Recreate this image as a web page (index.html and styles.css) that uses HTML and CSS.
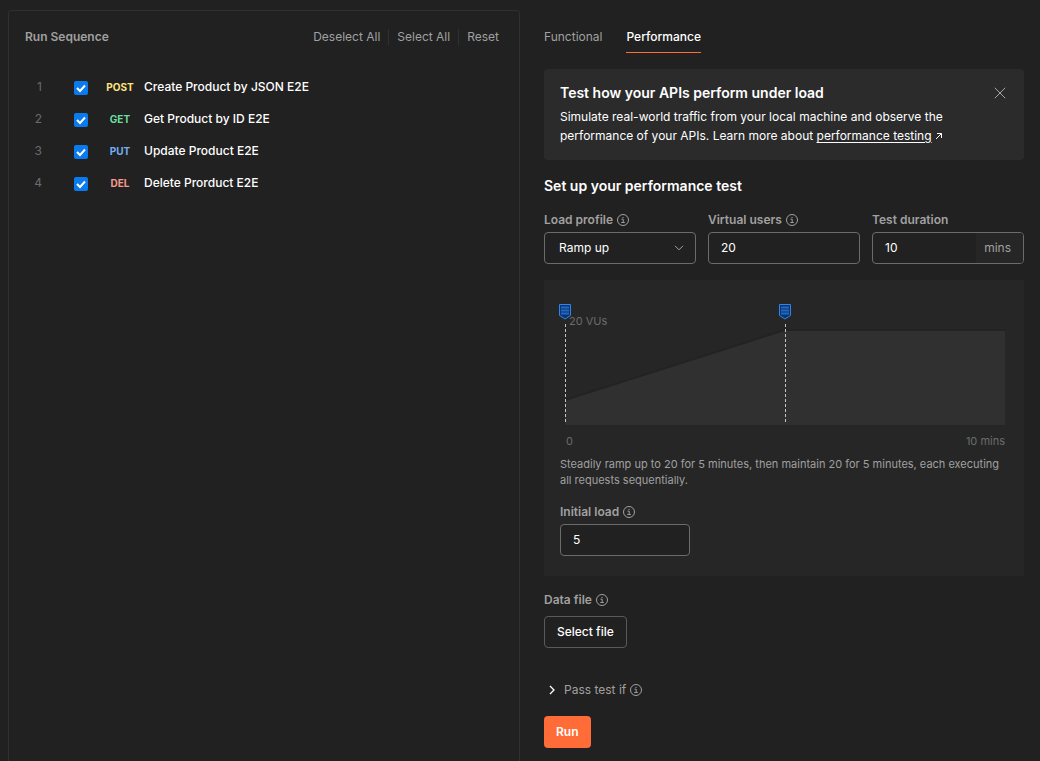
FILE: index.html
```html
<!DOCTYPE html>
<html lang="en">
<head>
<meta charset="utf-8">
<meta name="viewport" content="width=device-width, initial-scale=1">
<title>Collection runner</title>
<link rel="stylesheet" href="styles.css">
</head>
<body>
<svg class="defs" aria-hidden="true">
  <symbol id="info" viewBox="0 0 12 12">
    <circle cx="6" cy="6" r="5.5" fill="none" stroke="currentColor"/>
    <path d="M4.5 5.2H6.2V8.5M4.3 8.5H7.8" fill="none" stroke="currentColor"/>
    <path d="M5.5 3h1.1v1.1H5.5z" fill="currentColor"/>
  </symbol>
  <symbol id="pin" viewBox="0 0 12 16">
    <path d="M.5.5H11.5V11.5L6 15 .5 11.5Z" fill="#0a3575" stroke="#2f86e8"/>
    <path d="M2 3.5H10M2 6.5H10M2 9.5H10" stroke="#2468bd" stroke-width="2"/>
  </symbol>
</svg>
<main class="runner">
  <section class="sequence">
    <header class="sequence-head">
      <h2 class="sequence-title">Run Sequence</h2>
      <div class="actions">
        <button class="action" type="button">Deselect All</button>
        <button class="action" type="button">Select All</button>
        <button class="action" type="button">Reset</button>
      </div>
    </header>
    <ol class="requests">
      <li class="request"><span class="index">1</span><input class="check" type="checkbox" id="r1" checked><label class="request-label" for="r1"><span class="method post">POST</span>Create Product by JSON E2E</label></li>
      <li class="request"><span class="index">2</span><input class="check" type="checkbox" id="r2" checked><label class="request-label" for="r2"><span class="method get">GET</span>Get Product by ID E2E</label></li>
      <li class="request"><span class="index">3</span><input class="check" type="checkbox" id="r3" checked><label class="request-label" for="r3"><span class="method put">PUT</span>Update Product E2E</label></li>
      <li class="request"><span class="index">4</span><input class="check" type="checkbox" id="r4" checked><label class="request-label" for="r4"><span class="method del">DEL</span>Delete Prorduct E2E</label></li>
    </ol>
  </section>

  <section class="config">
    <nav class="tabs" role="tablist">
      <button class="tab" type="button" role="tab" aria-selected="false">Functional</button>
      <button class="tab active" type="button" role="tab" aria-selected="true">Performance</button>
    </nav>

    <aside class="banner">
      <div class="banner-body">
        <h3 class="heading">Test how your APIs perform under load</h3>
        <p class="banner-text">Simulate real-world traffic from your local machine and observe the performance of your APIs. Learn more about <a class="link" href="#">performance testing</a>
          <svg class="external" viewBox="0 0 8 8" aria-hidden="true"><path d="M2 1.5H6.5V6M6.5 1.5 1 7" fill="none" stroke="currentColor"/></svg></p>
      </div>
      <button class="close" type="button" aria-label="Close"><svg class="close-icon" viewBox="0 0 12 12"><path d="M.8.8 11.2 11.2M11.2.8.8 11.2" stroke="currentColor"/></svg></button>
    </aside>

    <h3 class="heading setup">Set up your performance test</h3>

    <div class="fields">
      <div class="field">
        <label class="label" for="profile">Load profile <svg class="info"><use href="#info"/></svg></label>
        <div class="select-wrap">
          <select class="control select" id="profile"><option>Ramp up</option><option>Fixed</option></select>
          <svg class="chevron" viewBox="0 0 10 6" aria-hidden="true"><path d="M1 .8 5 4.8 9 .8" fill="none" stroke="currentColor"/></svg>
        </div>
      </div>
      <div class="field">
        <label class="label" for="users">Virtual users <svg class="info"><use href="#info"/></svg></label>
        <input class="control text" id="users" type="text" value="20">
      </div>
      <div class="field">
        <label class="label" for="duration">Test duration</label>
        <div class="control with-unit"><input class="bare" id="duration" type="text" value="10"><span class="unit">mins</span></div>
      </div>
    </div>

    <div class="profile-card">
      <div class="chart">
        <svg class="area" viewBox="0 0 440 100" preserveAspectRatio="none" aria-hidden="true">
          <path d="M0 75 220 5H440" fill="none" stroke="#232323" stroke-width="2"/>
          <path d="M0 76 220 6H440V100H0Z" fill="#303030"/>
        </svg>
        <span class="marker start"><svg class="pin"><use href="#pin"/></svg></span>
        <span class="marker middle"><svg class="pin"><use href="#pin"/></svg></span>
        <span class="peak">20 VUs</span>
      </div>
      <div class="axis"><span>0</span><span>10 mins</span></div>
      <p class="summary">Steadily ramp up to 20 for 5 minutes, then maintain 20 for 5 minutes, each executing all requests sequentially.</p>
      <div class="field initial">
        <label class="label" for="initial">Initial load <svg class="info"><use href="#info"/></svg></label>
        <input class="control text" id="initial" type="text" value="5">
      </div>
    </div>

    <div class="field data">
      <label class="label" for="file">Data file <svg class="info"><use href="#info"/></svg></label>
      <button class="control file" id="file" type="button">Select file</button>
    </div>

    <button class="pass" type="button" aria-expanded="false">
      <svg class="caret" viewBox="0 0 6 10" aria-hidden="true"><path d="M1 1 5 5 1 9" fill="none" stroke="currentColor" stroke-width="1.3"/></svg>
      Pass test if <svg class="info"><use href="#info"/></svg>
    </button>
    <button class="run" type="button">Run</button>
  </section>
</main>
</body>
</html>
```
FILE: styles.css
```css
* { box-sizing: border-box; }

body {
  margin: 0;
  background: #212121;
  color: #fff;
  font: 12px/16px Inter, "Liberation Sans", sans-serif;
}

h2, h3, p, ol { margin: 0; padding: 0; }
ol { list-style: none; }
button, input, select { font: inherit; color: inherit; }
button { border: 0; padding: 0; background: none; cursor: pointer; white-space: nowrap; }
.defs { display: none; }

.runner {
  display: grid;
  grid-template-columns: 16fr 15fr;
  gap: 24px;
  min-height: 100vh;
  padding: 10px 16px 0 8px;
}

/* Run sequence */
.sequence {
  border: 1px solid #303030;
  border-bottom: 0;
  border-radius: 4px 4px 0 0;
  padding: 18px 12px 0 16px;
}
.sequence-head { display: flex; justify-content: space-between; align-items: center; }
.sequence-title { font-size: 12px; font-weight: 600; color: #a0a0a0; }
.actions { display: flex; }
.action { padding: 0 8px; color: #a0a0a0; }
.action + .action { border-left: 1px solid #303030; }
.requests { padding-top: 26px; }
.request { display: flex; align-items: center; height: 32px; }
.index { width: 17px; text-align: right; color: #6b6b6b; }
.check {
  appearance: none;
  width: 14px;
  height: 14px;
  margin: 2px 18px 0 32px;
  border-radius: 2px;
  background: #097bed url("data:image/svg+xml,%3Csvg xmlns='http://www.w3.org/2000/svg' viewBox='0 0 14 14'%3E%3Cpath d='M3 7 6 10 11 4.5' fill='none' stroke='white' stroke-width='2'/%3E%3C/svg%3E");
}
.request-label { display: flex; gap: 10px; font-weight: 500; }
.method { width: 28px; font-size: 10px; font-weight: 700; text-align: center; }
.post { color: #ffe47e; }
.get { color: #6bdd9a; }
.put { color: #74aef6; }
.del { color: #f79a8e; }

/* Configuration */
.config { display: flex; flex-direction: column; align-items: stretch; padding-top: 11px; }
.tabs { display: flex; gap: 24px; }
.tab { height: 32px; padding-top: 1px; color: #a0a0a0; border-bottom: 1px solid transparent; }
.active { color: #fff; font-weight: 500; border-color: #ff6c37; }

.banner {
  display: flex;
  justify-content: space-between;
  align-items: flex-start;
  gap: 16px;
  margin-top: 16px;
  padding: 14px 16px 15px;
  border-radius: 4px;
  background: #2b2b2b;
}
.banner-body { max-width: 400px; }
.heading { font-size: 14px; line-height: 20px; font-weight: 600; }
.banner-text { margin-top: 4px; line-height: 19px; }
.link { color: inherit; text-underline-offset: 2px; }
.external { width: 8px; height: 8px; }
.close { display: flex; padding: 4px 2px; color: #a6a6a6; }
.close-icon { width: 12px; height: 12px; }
.setup { margin-top: 16px; }

.fields { display: grid; grid-template-columns: repeat(3, minmax(0, 1fr)); gap: 12px; margin-top: 16px; }
.field { display: flex; flex-direction: column; gap: 4px; }
.label { display: flex; align-items: center; gap: 4px; font-weight: 600; color: #a0a0a0; }
.info { width: 12px; height: 12px; }
.control {
  width: 100%;
  height: 32px;
  padding: 0 12px;
  border: 1px solid #6b6b6b;
  border-radius: 4px;
  background: #212121;
}
.text { padding-bottom: 1px; }
.select-wrap { position: relative; }
.select { appearance: none; padding: 0 14px; }
.chevron { position: absolute; right: 12px; top: 13px; width: 10px; height: 6px; color: #a6a6a6; pointer-events: none; }
.with-unit { display: flex; padding-right: 0; overflow: hidden; }
.bare { flex: 1; min-width: 0; padding: 0; border: 0; background: none; }
.unit { display: flex; align-items: center; padding: 0 12px 0 8px; background: #262626; color: #a0a0a0; }

.profile-card { margin-top: 16px; padding: 24px 16px 20px; background: #262626; }
.chart { position: relative; height: 121px; margin: 0 3px 0 5px; }
.area { display: block; width: 100%; height: 121px; padding-top: 21px; }
.marker { position: absolute; top: 20px; bottom: 1px; width: 1px; background: repeating-linear-gradient(#c4c4c4 0 3px, transparent 3px 5px); }
.start { left: 0; }
.middle { left: 50%; }
.pin { position: absolute; left: -6px; top: -20px; width: 12px; height: 16px; }
.peak { position: absolute; left: 4px; top: 9px; font-size: 11px; color: #6b6b6b; }
.axis { display: flex; justify-content: space-between; margin: 8px 3px 0 6px; font-size: 11px; color: #6b6b6b; }
.summary { margin-top: 7px; font-size: 11px; color: #a0a0a0; }
.initial { width: 130px; margin-top: 16px; }

.data { margin-top: 16px; gap: 8px; }
.file { align-self: flex-start; width: auto; border-color: #5a5a5a; font-weight: 500; }
.pass { display: flex; align-items: center; align-self: flex-start; gap: 4px; margin-top: 34px; padding-left: 5px; color: #a0a0a0; }
.caret { width: 6px; height: 10px; margin-right: 5px; color: #fff; }
.run { align-self: flex-start; height: 32px; margin-top: 18px; padding: 0 12px; border-radius: 4px; background: #ff6c37; font-weight: 600; }
```
